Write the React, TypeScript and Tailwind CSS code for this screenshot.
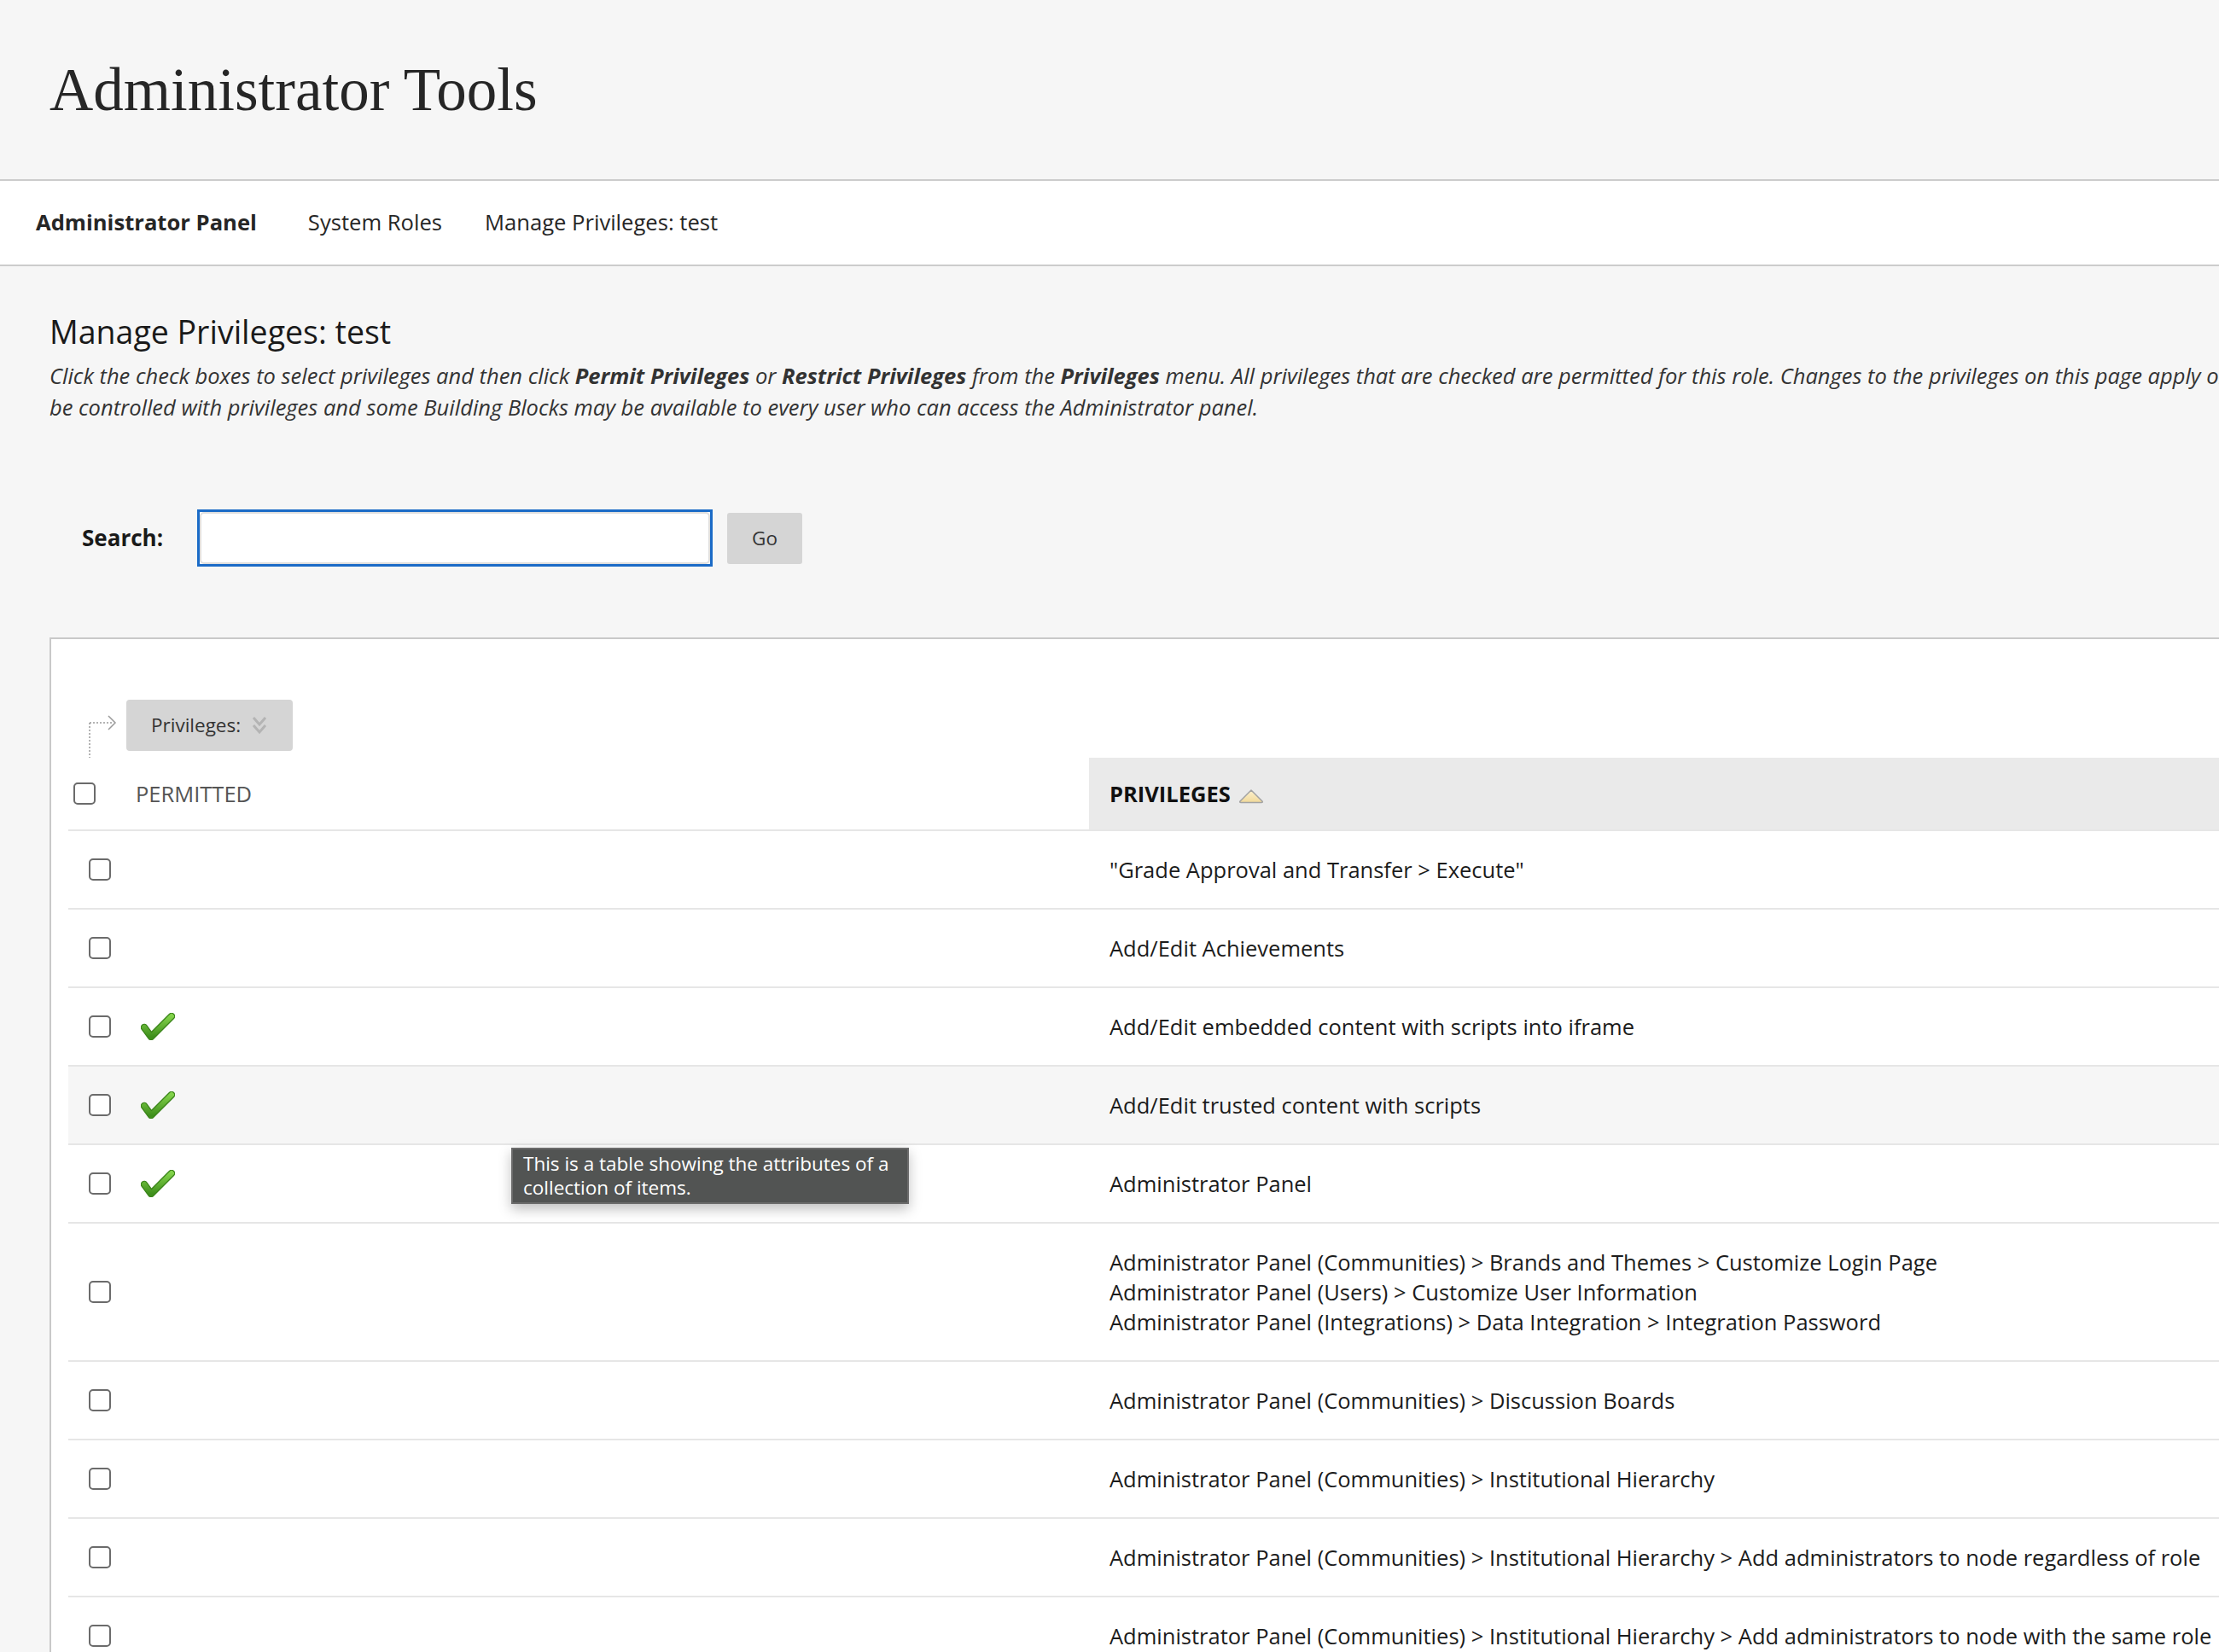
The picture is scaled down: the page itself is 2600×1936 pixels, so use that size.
import React from "react";

type Row = {
  lines: string[];
  permitted?: boolean;
  hover?: boolean;
};

const rows: Row[] = [
  { lines: ['"Grade Approval and Transfer > Execute"'] },
  { lines: ["Add/Edit Achievements"] },
  { lines: ["Add/Edit embedded content with scripts into iframe"], permitted: true },
  { lines: ["Add/Edit trusted content with scripts"], permitted: true, hover: true },
  { lines: ["Administrator Panel"], permitted: true },
  {
    lines: [
      "Administrator Panel (Communities) > Brands and Themes > Customize Login Page",
      "Administrator Panel (Users) > Customize User Information",
      "Administrator Panel (Integrations) > Data Integration > Integration Password",
    ],
  },
  { lines: ["Administrator Panel (Communities) > Discussion Boards"] },
  { lines: ["Administrator Panel (Communities) > Institutional Hierarchy"] },
  { lines: ["Administrator Panel (Communities) > Institutional Hierarchy > Add administrators to node regardless of role"] },
  { lines: ["Administrator Panel (Communities) > Institutional Hierarchy > Add administrators to node with the same role"] },
  { lines: ["Administrator Panel (Communities) > Institutional Hierarchy > Add administrators to node"] },
];

function Checkbox() {
  return <div className="w-[26px] h-[26px] rounded-[5px] border-2 border-[#6b6b6b] bg-white" />;
}

function GreenCheck() {
  return (
    <svg width="40" height="32" viewBox="0 0 40 32">
      <defs>
        <linearGradient id="chk" x1="0" y1="0" x2="0" y2="1">
          <stop offset="0" stopColor="#82d24a" />
          <stop offset="1" stopColor="#3f8f1c" />
        </linearGradient>
      </defs>
      <path
        d="M4 17 L12 28 L36 4"
        fill="none"
        stroke="#3a8419"
        strokeWidth="8.5"
        strokeLinecap="round"
        strokeLinejoin="round"
      />
      <path
        d="M4 17 L12 28 L36 4"
        fill="none"
        stroke="url(#chk)"
        strokeWidth="6"
        strokeLinecap="round"
        strokeLinejoin="round"
      />
    </svg>
  );
}

export default function App() {
  return (
    <div className="relative w-full h-[1936px] overflow-hidden bg-[#f6f6f6] font-['Open_Sans',sans-serif] text-[#222]">
      {/* page title */}
      <header className="h-[212px] flex items-center pl-[58px] border-b-2 border-[#cccccc]">
        <h1 className="font-['Liberation_Serif',serif] text-[71px] leading-none text-[#262626]">
          Administrator Tools
        </h1>
      </header>

      {/* breadcrumbs */}
      <nav className="h-[100px] bg-white border-b-2 border-[#cccccc] flex items-center pl-[42px] text-[25.6px] text-[#262626]">
        <span className="font-bold">Administrator Panel</span>
        <span className="ml-[60px]">System Roles</span>
        <span className="ml-[50px]">Manage Privileges: test</span>
      </nav>

      <main className="pl-[58px]">
        <h2 className="mt-[56px] text-[37.5px] leading-[42px] text-[#1a1a1a]">Manage Privileges: test</h2>
        <p className="mt-[12px] italic text-[25.5px] leading-[37px] text-[#333] whitespace-nowrap">
          Click the check boxes to select privileges and then click <b>Permit Privileges</b> or{" "}
          <b>Restrict Privileges</b> from the <b>Privileges</b> menu. All privileges that are checked are
          permitted for this role. Changes to the privileges on this page apply only to the Administrator
          Panel. Not all Building Blocks can
          <br />
          be controlled with privileges and some Building Blocks may be available to every user who can access
          the Administrator panel.
        </p>

        {/* search */}
        <div className="mt-[101px] flex items-center">
          <label className="ml-[38px] w-[135px] font-bold text-[26px] text-[#1a1a1a]">Search:</label>
          <div className="w-[604px] h-[67px] border-[3px] border-[#1b6bc7] bg-white">
            <div className="h-full w-full rounded-[5px] border-2 border-[#dedede] bg-white" />
          </div>
          <button className="ml-[17px] w-[88px] h-[60px] rounded-[3px] bg-[#d5d5d5] text-[22.5px] text-[#333]">
            Go
          </button>
        </div>

        {/* table */}
        <div className="mt-[83px] w-[2620px] border-2 border-[#c9c9c9] bg-white pt-[71px] pl-[20px]">
          <div className="flex items-start h-[60px]">
            <svg width="34" height="68" viewBox="0 0 34 68" className="ml-[23px] mt-[18px] shrink-0">
              <path d="M2 9 H30" stroke="#9a9a9a" strokeWidth="1.5" strokeDasharray="2 2" fill="none" />
              <path d="M2 9 V50" stroke="#9a9a9a" strokeWidth="1.5" strokeDasharray="2 2" fill="none" />
              <path d="M24 1 L32 9 L24 17" stroke="#9a9a9a" strokeWidth="1.5" fill="none" />
            </svg>
            <button className="ml-[11px] w-[195px] h-[60px] rounded-[4px] bg-[#d5d5d5] flex items-center pl-[29px] text-[22.5px] text-[#333]">
              Privileges:
              <svg width="20" height="28" viewBox="0 0 20 28" className="ml-[12px]">
                <path d="M3 5 L10 13 L17 5" stroke="#b4b4b4" strokeWidth="3" fill="none" />
                <path d="M3 14 L10 22 L17 14" stroke="#b4b4b4" strokeWidth="3" fill="none" />
              </svg>
            </button>
          </div>

          {/* header row */}
          <div className="mt-[8px] flex h-[86px] border-b-2 border-[#e6e6e6]">
            <div className="w-[70px] flex items-center pl-[6px]">
              <Checkbox />
            </div>
            <div className="w-[1126px] flex items-center pl-[9px] text-[25.5px] text-[#555]">PERMITTED</div>
            <div className="flex-1 bg-[#eaeaea] flex items-center pl-[24px] text-[25.5px] font-bold text-[#111]">
              PRIVILEGES
              <svg width="30" height="18" viewBox="0 0 30 18" className="ml-[9px] mt-[6px]">
                <defs>
                  <linearGradient id="tri" x1="0" y1="0" x2="0" y2="1">
                    <stop offset="0" stopColor="#fdf1cf" />
                    <stop offset="1" stopColor="#f1d999" />
                  </linearGradient>
                </defs>
                <path
                  d="M15 2 L28 15 Q29 16.5 27 16.5 H3 Q1 16.5 2 15 Z"
                  fill="url(#tri)"
                  stroke="#a3a3a3"
                  strokeWidth="1.5"
                  strokeLinejoin="round"
                />
              </svg>
            </div>
          </div>

          {/* body rows */}
          {rows.map((r, i) => (
            <div
              key={i}
              className={`flex items-stretch border-b-2 border-[#e6e6e6] ${r.hover ? "bg-[#f6f6f6]" : ""}`}
            >
              <div className="w-[70px] flex items-center pl-[24px]">
                <Checkbox />
              </div>
              <div className="w-[1126px] flex items-center pl-[15px]">{r.permitted && <GreenCheck />}</div>
              <div className="flex-1 py-[27.5px] pl-[24px] text-[25.5px] leading-[35px] text-[#1c1c1c] whitespace-nowrap">
                {r.lines.map((l, j) => (
                  <div key={j}>{l}</div>
                ))}
              </div>
            </div>
          ))}
        </div>
      </main>

      {/* tooltip */}
      <div className="absolute left-[599px] top-[1345px] w-[466px] h-[66px] bg-[#525453] border-2 border-[#6b6b6b] shadow-[0_6px_14px_rgba(0,0,0,0.25)] px-[12px] pt-[3px] text-[22.5px] leading-[28px] text-white whitespace-nowrap">
        This is a table showing the attributes of a
        <br />
        collection of items.
      </div>
    </div>
  );
}
